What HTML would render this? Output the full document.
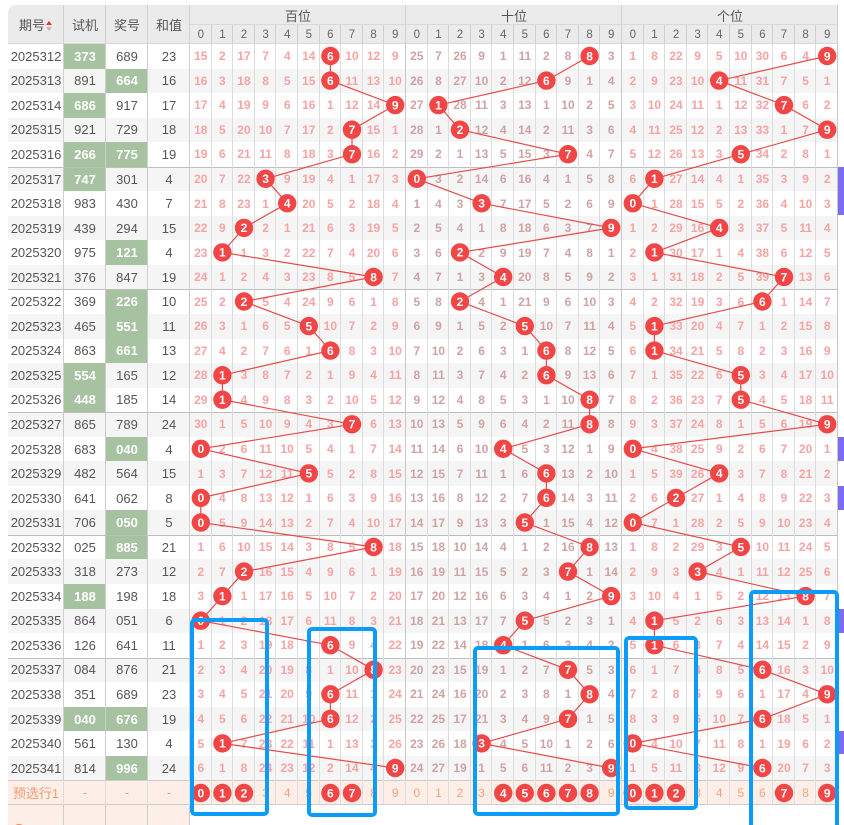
<!DOCTYPE html>
<html><head><meta charset="utf-8"><style>
html,body{margin:0;padding:0;background:#fff;width:844px;height:825px;overflow:hidden;position:relative}
table{position:absolute;left:8px;top:5px;border-collapse:collapse;table-layout:fixed;width:830px;font-family:"Liberation Sans","Noto Sans CJK SC",sans-serif}
td,th{padding:0;text-align:center;overflow:hidden;white-space:nowrap;box-shadow:inset -1px 0 #dcdcdc}
thead th{background:#ebebeb;color:#555;font-weight:normal;font-size:13px;box-shadow:inset -1px 0 #d0d0d0,inset 0 -1px #d8d8d8}
thead tr.h1 th{height:20px}
thead tr.h2 th{height:19px;font-size:11.5px;color:#666}
th.l{font-size:13px}
tbody td{height:24.55px;font-size:12px;font-weight:bold;color:#f7a3a3}
tbody tr:nth-child(even) td{background:#f5f5f5}
tbody td:nth-child(-n+4){color:#555;font-weight:normal;font-size:13px;box-shadow:inset -1px 0 #cfcfcf}
tbody td:nth-child(n+15):nth-child(-n+24){color:#cfa3a3}
tbody td:nth-child(14),tbody td:nth-child(24),tbody td:nth-child(34){box-shadow:inset -1px 0 #c8c8c8}
tbody tr.s td{box-shadow:inset -1px 0 #dcdcdc,inset 0 1px #bdbdbd}
tbody tr.s td:nth-child(-n+4),tbody tr.s td:nth-child(14),tbody tr.s td:nth-child(24),tbody tr.s td:nth-child(34){box-shadow:inset -1px 0 #c8c8c8,inset 0 1px #bdbdbd}
tbody td.g{background:#a6c2a0 !important;color:#fff !important;font-weight:bold !important}
tbody tr.p td{background:#fdeee7 !important;color:#f3a27a !important;font-weight:normal;height:25px;box-shadow:inset -1px 0 #ddd,inset 0 1px #ccc,inset 0 -1px #ccc}
tbody tr.p td:nth-child(-n+4){color:#f39a72 !important;font-size:13px}
tbody tr.q td{height:20px;background:#fff !important;box-shadow:none}
tbody tr.q td:nth-child(-n+4){background:#fdeee7 !important;box-shadow:inset -1px 0 #ccc}
.ar{display:inline-block;width:8px;vertical-align:middle;position:relative;height:12px}
.ar:before{content:"";position:absolute;left:1px;top:0;border:3.5px solid transparent;border-bottom:4px solid #e33;border-top:0}
.ar:after{content:"";position:absolute;left:1px;top:6px;border:3.5px solid transparent;border-top:4px solid #bbb;border-bottom:0}
.pb{position:absolute;left:838px;width:6px;background:#7b6cf2}
svg{position:absolute;left:0;top:0}
</style></head><body>
<div class="pb" style="top:167px;height:48px"></div>
<div class="pb" style="top:437px;height:24px"></div>
<div class="pb" style="top:486px;height:24px"></div>
<div class="pb" style="top:609px;height:24px"></div>
<div class="pb" style="top:731px;height:23px"></div>
<table>
<colgroup><col style="width:56px"><col style="width:42px"><col style="width:42px"><col style="width:42px">
<col span="30" style="width:21.6px"></colgroup>
<thead>
<tr class="h1"><th rowspan="2" class="l" style="border-top-left-radius:8px">期号<span class="ar"></span></th><th rowspan="2" class="l">试机</th><th rowspan="2" class="l">奖号</th><th rowspan="2" class="l">和值</th><th colspan="10">百位</th><th colspan="10">十位</th><th colspan="10">个位</th></tr>
<tr class="h2"><th>0</th><th>1</th><th>2</th><th>3</th><th>4</th><th>5</th><th>6</th><th>7</th><th>8</th><th>9</th><th>0</th><th>1</th><th>2</th><th>3</th><th>4</th><th>5</th><th>6</th><th>7</th><th>8</th><th>9</th><th>0</th><th>1</th><th>2</th><th>3</th><th>4</th><th>5</th><th>6</th><th>7</th><th>8</th><th>9</th></tr>
</thead>
<tbody>
<tr><td>2025312</td><td class="g">373</td><td>689</td><td>23</td><td>15</td><td>2</td><td>17</td><td>7</td><td>4</td><td>14</td><td></td><td>10</td><td>12</td><td>9</td><td>25</td><td>7</td><td>26</td><td>9</td><td>1</td><td>11</td><td>2</td><td>8</td><td></td><td>3</td><td>1</td><td>8</td><td>22</td><td>9</td><td>5</td><td>10</td><td>30</td><td>6</td><td>4</td><td></td></tr>
<tr><td>2025313</td><td>891</td><td class="g">664</td><td>16</td><td>16</td><td>3</td><td>18</td><td>8</td><td>5</td><td>15</td><td></td><td>11</td><td>13</td><td>10</td><td>26</td><td>8</td><td>27</td><td>10</td><td>2</td><td>12</td><td></td><td>9</td><td>1</td><td>4</td><td>2</td><td>9</td><td>23</td><td>10</td><td></td><td>11</td><td>31</td><td>7</td><td>5</td><td>1</td></tr>
<tr><td>2025314</td><td class="g">686</td><td>917</td><td>17</td><td>17</td><td>4</td><td>19</td><td>9</td><td>6</td><td>16</td><td>1</td><td>12</td><td>14</td><td></td><td>27</td><td></td><td>28</td><td>11</td><td>3</td><td>13</td><td>1</td><td>10</td><td>2</td><td>5</td><td>3</td><td>10</td><td>24</td><td>11</td><td>1</td><td>12</td><td>32</td><td></td><td>6</td><td>2</td></tr>
<tr><td>2025315</td><td>921</td><td>729</td><td>18</td><td>18</td><td>5</td><td>20</td><td>10</td><td>7</td><td>17</td><td>2</td><td></td><td>15</td><td>1</td><td>28</td><td>1</td><td></td><td>12</td><td>4</td><td>14</td><td>2</td><td>11</td><td>3</td><td>6</td><td>4</td><td>11</td><td>25</td><td>12</td><td>2</td><td>13</td><td>33</td><td>1</td><td>7</td><td></td></tr>
<tr><td>2025316</td><td class="g">266</td><td class="g">775</td><td>19</td><td>19</td><td>6</td><td>21</td><td>11</td><td>8</td><td>18</td><td>3</td><td></td><td>16</td><td>2</td><td>29</td><td>2</td><td>1</td><td>13</td><td>5</td><td>15</td><td>3</td><td></td><td>4</td><td>7</td><td>5</td><td>12</td><td>26</td><td>13</td><td>3</td><td></td><td>34</td><td>2</td><td>8</td><td>1</td></tr>
<tr class="s"><td>2025317</td><td class="g">747</td><td>301</td><td>4</td><td>20</td><td>7</td><td>22</td><td></td><td>9</td><td>19</td><td>4</td><td>1</td><td>17</td><td>3</td><td></td><td>3</td><td>2</td><td>14</td><td>6</td><td>16</td><td>4</td><td>1</td><td>5</td><td>8</td><td>6</td><td></td><td>27</td><td>14</td><td>4</td><td>1</td><td>35</td><td>3</td><td>9</td><td>2</td></tr>
<tr><td>2025318</td><td>983</td><td>430</td><td>7</td><td>21</td><td>8</td><td>23</td><td>1</td><td></td><td>20</td><td>5</td><td>2</td><td>18</td><td>4</td><td>1</td><td>4</td><td>3</td><td></td><td>7</td><td>17</td><td>5</td><td>2</td><td>6</td><td>9</td><td></td><td>1</td><td>28</td><td>15</td><td>5</td><td>2</td><td>36</td><td>4</td><td>10</td><td>3</td></tr>
<tr><td>2025319</td><td>439</td><td>294</td><td>15</td><td>22</td><td>9</td><td></td><td>2</td><td>1</td><td>21</td><td>6</td><td>3</td><td>19</td><td>5</td><td>2</td><td>5</td><td>4</td><td>1</td><td>8</td><td>18</td><td>6</td><td>3</td><td>7</td><td></td><td>1</td><td>2</td><td>29</td><td>16</td><td></td><td>3</td><td>37</td><td>5</td><td>11</td><td>4</td></tr>
<tr><td>2025320</td><td>975</td><td class="g">121</td><td>4</td><td>23</td><td></td><td>1</td><td>3</td><td>2</td><td>22</td><td>7</td><td>4</td><td>20</td><td>6</td><td>3</td><td>6</td><td></td><td>2</td><td>9</td><td>19</td><td>7</td><td>4</td><td>8</td><td>1</td><td>2</td><td></td><td>30</td><td>17</td><td>1</td><td>4</td><td>38</td><td>6</td><td>12</td><td>5</td></tr>
<tr><td>2025321</td><td>376</td><td>847</td><td>19</td><td>24</td><td>1</td><td>2</td><td>4</td><td>3</td><td>23</td><td>8</td><td>5</td><td></td><td>7</td><td>4</td><td>7</td><td>1</td><td>3</td><td></td><td>20</td><td>8</td><td>5</td><td>9</td><td>2</td><td>3</td><td>1</td><td>31</td><td>18</td><td>2</td><td>5</td><td>39</td><td></td><td>13</td><td>6</td></tr>
<tr class="s"><td>2025322</td><td>369</td><td class="g">226</td><td>10</td><td>25</td><td>2</td><td></td><td>5</td><td>4</td><td>24</td><td>9</td><td>6</td><td>1</td><td>8</td><td>5</td><td>8</td><td></td><td>4</td><td>1</td><td>21</td><td>9</td><td>6</td><td>10</td><td>3</td><td>4</td><td>2</td><td>32</td><td>19</td><td>3</td><td>6</td><td></td><td>1</td><td>14</td><td>7</td></tr>
<tr><td>2025323</td><td>465</td><td class="g">551</td><td>11</td><td>26</td><td>3</td><td>1</td><td>6</td><td>5</td><td></td><td>10</td><td>7</td><td>2</td><td>9</td><td>6</td><td>9</td><td>1</td><td>5</td><td>2</td><td></td><td>10</td><td>7</td><td>11</td><td>4</td><td>5</td><td></td><td>33</td><td>20</td><td>4</td><td>7</td><td>1</td><td>2</td><td>15</td><td>8</td></tr>
<tr><td>2025324</td><td>863</td><td class="g">661</td><td>13</td><td>27</td><td>4</td><td>2</td><td>7</td><td>6</td><td>1</td><td></td><td>8</td><td>3</td><td>10</td><td>7</td><td>10</td><td>2</td><td>6</td><td>3</td><td>1</td><td></td><td>8</td><td>12</td><td>5</td><td>6</td><td></td><td>34</td><td>21</td><td>5</td><td>8</td><td>2</td><td>3</td><td>16</td><td>9</td></tr>
<tr><td>2025325</td><td class="g">554</td><td>165</td><td>12</td><td>28</td><td></td><td>3</td><td>8</td><td>7</td><td>2</td><td>1</td><td>9</td><td>4</td><td>11</td><td>8</td><td>11</td><td>3</td><td>7</td><td>4</td><td>2</td><td></td><td>9</td><td>13</td><td>6</td><td>7</td><td>1</td><td>35</td><td>22</td><td>6</td><td></td><td>3</td><td>4</td><td>17</td><td>10</td></tr>
<tr><td>2025326</td><td class="g">448</td><td>185</td><td>14</td><td>29</td><td></td><td>4</td><td>9</td><td>8</td><td>3</td><td>2</td><td>10</td><td>5</td><td>12</td><td>9</td><td>12</td><td>4</td><td>8</td><td>5</td><td>3</td><td>1</td><td>10</td><td></td><td>7</td><td>8</td><td>2</td><td>36</td><td>23</td><td>7</td><td></td><td>4</td><td>5</td><td>18</td><td>11</td></tr>
<tr class="s"><td>2025327</td><td>865</td><td>789</td><td>24</td><td>30</td><td>1</td><td>5</td><td>10</td><td>9</td><td>4</td><td>3</td><td></td><td>6</td><td>13</td><td>10</td><td>13</td><td>5</td><td>9</td><td>6</td><td>4</td><td>2</td><td>11</td><td></td><td>8</td><td>9</td><td>3</td><td>37</td><td>24</td><td>8</td><td>1</td><td>5</td><td>6</td><td>19</td><td></td></tr>
<tr><td>2025328</td><td>683</td><td class="g">040</td><td>4</td><td></td><td>2</td><td>6</td><td>11</td><td>10</td><td>5</td><td>4</td><td>1</td><td>7</td><td>14</td><td>11</td><td>14</td><td>6</td><td>10</td><td></td><td>5</td><td>3</td><td>12</td><td>1</td><td>9</td><td></td><td>4</td><td>38</td><td>25</td><td>9</td><td>2</td><td>6</td><td>7</td><td>20</td><td>1</td></tr>
<tr><td>2025329</td><td>482</td><td>564</td><td>15</td><td>1</td><td>3</td><td>7</td><td>12</td><td>11</td><td></td><td>5</td><td>2</td><td>8</td><td>15</td><td>12</td><td>15</td><td>7</td><td>11</td><td>1</td><td>6</td><td></td><td>13</td><td>2</td><td>10</td><td>1</td><td>5</td><td>39</td><td>26</td><td></td><td>3</td><td>7</td><td>8</td><td>21</td><td>2</td></tr>
<tr><td>2025330</td><td>641</td><td>062</td><td>8</td><td></td><td>4</td><td>8</td><td>13</td><td>12</td><td>1</td><td>6</td><td>3</td><td>9</td><td>16</td><td>13</td><td>16</td><td>8</td><td>12</td><td>2</td><td>7</td><td></td><td>14</td><td>3</td><td>11</td><td>2</td><td>6</td><td></td><td>27</td><td>1</td><td>4</td><td>8</td><td>9</td><td>22</td><td>3</td></tr>
<tr><td>2025331</td><td>706</td><td class="g">050</td><td>5</td><td></td><td>5</td><td>9</td><td>14</td><td>13</td><td>2</td><td>7</td><td>4</td><td>10</td><td>17</td><td>14</td><td>17</td><td>9</td><td>13</td><td>3</td><td></td><td>1</td><td>15</td><td>4</td><td>12</td><td></td><td>7</td><td>1</td><td>28</td><td>2</td><td>5</td><td>9</td><td>10</td><td>23</td><td>4</td></tr>
<tr class="s"><td>2025332</td><td>025</td><td class="g">885</td><td>21</td><td>1</td><td>6</td><td>10</td><td>15</td><td>14</td><td>3</td><td>8</td><td>5</td><td></td><td>18</td><td>15</td><td>18</td><td>10</td><td>14</td><td>4</td><td>1</td><td>2</td><td>16</td><td></td><td>13</td><td>1</td><td>8</td><td>2</td><td>29</td><td>3</td><td></td><td>10</td><td>11</td><td>24</td><td>5</td></tr>
<tr><td>2025333</td><td>318</td><td>273</td><td>12</td><td>2</td><td>7</td><td></td><td>16</td><td>15</td><td>4</td><td>9</td><td>6</td><td>1</td><td>19</td><td>16</td><td>19</td><td>11</td><td>15</td><td>5</td><td>2</td><td>3</td><td></td><td>1</td><td>14</td><td>2</td><td>9</td><td>3</td><td></td><td>4</td><td>1</td><td>11</td><td>12</td><td>25</td><td>6</td></tr>
<tr><td>2025334</td><td class="g">188</td><td>198</td><td>18</td><td>3</td><td></td><td>1</td><td>17</td><td>16</td><td>5</td><td>10</td><td>7</td><td>2</td><td>20</td><td>17</td><td>20</td><td>12</td><td>16</td><td>6</td><td>3</td><td>4</td><td>1</td><td>2</td><td></td><td>3</td><td>10</td><td>4</td><td>1</td><td>5</td><td>2</td><td>12</td><td>13</td><td></td><td>7</td></tr>
<tr><td>2025335</td><td>864</td><td>051</td><td>6</td><td></td><td>1</td><td>2</td><td>18</td><td>17</td><td>6</td><td>11</td><td>8</td><td>3</td><td>21</td><td>18</td><td>21</td><td>13</td><td>17</td><td>7</td><td></td><td>5</td><td>2</td><td>3</td><td>1</td><td>4</td><td></td><td>5</td><td>2</td><td>6</td><td>3</td><td>13</td><td>14</td><td>1</td><td>8</td></tr>
<tr><td>2025336</td><td>126</td><td>641</td><td>11</td><td>1</td><td>2</td><td>3</td><td>19</td><td>18</td><td>7</td><td></td><td>9</td><td>4</td><td>22</td><td>19</td><td>22</td><td>14</td><td>18</td><td></td><td>1</td><td>6</td><td>3</td><td>4</td><td>2</td><td>5</td><td></td><td>6</td><td>3</td><td>7</td><td>4</td><td>14</td><td>15</td><td>2</td><td>9</td></tr>
<tr class="s"><td>2025337</td><td>084</td><td>876</td><td>21</td><td>2</td><td>3</td><td>4</td><td>20</td><td>19</td><td>8</td><td>1</td><td>10</td><td></td><td>23</td><td>20</td><td>23</td><td>15</td><td>19</td><td>1</td><td>2</td><td>7</td><td></td><td>5</td><td>3</td><td>6</td><td>1</td><td>7</td><td>4</td><td>8</td><td>5</td><td></td><td>16</td><td>3</td><td>10</td></tr>
<tr><td>2025338</td><td>351</td><td>689</td><td>23</td><td>3</td><td>4</td><td>5</td><td>21</td><td>20</td><td>9</td><td></td><td>11</td><td>1</td><td>24</td><td>21</td><td>24</td><td>16</td><td>20</td><td>2</td><td>3</td><td>8</td><td>1</td><td></td><td>4</td><td>7</td><td>2</td><td>8</td><td>5</td><td>9</td><td>6</td><td>1</td><td>17</td><td>4</td><td></td></tr>
<tr><td>2025339</td><td class="g">040</td><td class="g">676</td><td>19</td><td>4</td><td>5</td><td>6</td><td>22</td><td>21</td><td>10</td><td></td><td>12</td><td>2</td><td>25</td><td>22</td><td>25</td><td>17</td><td>21</td><td>3</td><td>4</td><td>9</td><td></td><td>1</td><td>5</td><td>8</td><td>3</td><td>9</td><td>6</td><td>10</td><td>7</td><td></td><td>18</td><td>5</td><td>1</td></tr>
<tr><td>2025340</td><td>561</td><td>130</td><td>4</td><td>5</td><td></td><td>7</td><td>23</td><td>22</td><td>11</td><td>1</td><td>13</td><td>3</td><td>26</td><td>23</td><td>26</td><td>18</td><td></td><td>4</td><td>5</td><td>10</td><td>1</td><td>2</td><td>6</td><td></td><td>4</td><td>10</td><td>7</td><td>11</td><td>8</td><td>1</td><td>19</td><td>6</td><td>2</td></tr>
<tr><td>2025341</td><td>814</td><td class="g">996</td><td>24</td><td>6</td><td>1</td><td>8</td><td>24</td><td>23</td><td>12</td><td>2</td><td>14</td><td>4</td><td></td><td>24</td><td>27</td><td>19</td><td>1</td><td>5</td><td>6</td><td>11</td><td>2</td><td>3</td><td></td><td>1</td><td>5</td><td>11</td><td>8</td><td>12</td><td>9</td><td></td><td>20</td><td>7</td><td>3</td></tr>
<tr class="p"><td>预选行1</td><td>-</td><td>-</td><td>-</td><td></td><td></td><td></td><td>3</td><td>4</td><td>5</td><td></td><td></td><td>8</td><td>9</td><td>0</td><td>1</td><td>2</td><td>3</td><td></td><td></td><td></td><td></td><td></td><td>9</td><td></td><td></td><td></td><td>3</td><td>4</td><td>5</td><td>6</td><td></td><td>8</td><td></td></tr>
<tr class="q"><td></td><td></td><td></td><td></td><td></td><td></td><td></td><td></td><td></td><td></td><td></td><td></td><td></td><td></td><td></td><td></td><td></td><td></td><td></td><td></td><td></td><td></td><td></td><td></td><td></td><td></td><td></td><td></td><td></td><td></td><td></td><td></td><td></td><td></td></tr>
</tbody></table>
<svg width="844" height="825" viewBox="0 0 844 825">
<circle cx="19" cy="831" r="7" fill="#f28a5c"/>
<g fill="none" stroke="#e84a4a" stroke-width="1.2">
<polyline points="330.4,56 330.4,80.6 395.2,105.1 352,129.7 352,154.2 265.6,178.8 287.2,203.3 244,227.9 222.4,252.4 373.6,277 244,301.5 308.8,326.1 330.4,350.6 222.4,375.2 222.4,399.7 352,424.3 200.8,448.8 308.8,473.4 200.8,497.9 200.8,522.5 373.6,547 244,571.6 222.4,596.1 200.8,620.7 330.4,645.2 373.6,669.8 330.4,694.3 330.4,718.9 222.4,743.4 395.2,768"/>
<polyline points="589.6,56 546.4,80.6 438.4,105.1 460,129.7 568,154.2 416.8,178.8 481.6,203.3 611.2,227.9 460,252.4 503.2,277 460,301.5 524.8,326.1 546.4,350.6 546.4,375.2 589.6,399.7 589.6,424.3 503.2,448.8 546.4,473.4 546.4,497.9 524.8,522.5 589.6,547 568,571.6 611.2,596.1 524.8,620.7 503.2,645.2 568,669.8 589.6,694.3 568,718.9 481.6,743.4 611.2,768"/>
<polyline points="827.2,56 719.2,80.6 784,105.1 827.2,129.7 740.8,154.2 654.4,178.8 632.8,203.3 719.2,227.9 654.4,252.4 784,277 762.4,301.5 654.4,326.1 654.4,350.6 740.8,375.2 740.8,399.7 827.2,424.3 632.8,448.8 719.2,473.4 676,497.9 632.8,522.5 740.8,547 697.6,571.6 805.6,596.1 654.4,620.7 654.4,645.2 762.4,669.8 827.2,694.3 762.4,718.9 632.8,743.4 762.4,768"/>
</g>
<g fill="#f24545">
<circle cx="330.4" cy="56" r="9.2"/><circle cx="330.4" cy="80.6" r="9.2"/><circle cx="395.2" cy="105.1" r="9.2"/><circle cx="352" cy="129.7" r="9.2"/><circle cx="352" cy="154.2" r="9.2"/><circle cx="265.6" cy="178.8" r="9.2"/><circle cx="287.2" cy="203.3" r="9.2"/><circle cx="244" cy="227.9" r="9.2"/><circle cx="222.4" cy="252.4" r="9.2"/><circle cx="373.6" cy="277" r="9.2"/><circle cx="244" cy="301.5" r="9.2"/><circle cx="308.8" cy="326.1" r="9.2"/><circle cx="330.4" cy="350.6" r="9.2"/><circle cx="222.4" cy="375.2" r="9.2"/><circle cx="222.4" cy="399.7" r="9.2"/><circle cx="352" cy="424.3" r="9.2"/><circle cx="200.8" cy="448.8" r="9.2"/><circle cx="308.8" cy="473.4" r="9.2"/><circle cx="200.8" cy="497.9" r="9.2"/><circle cx="200.8" cy="522.5" r="9.2"/><circle cx="373.6" cy="547" r="9.2"/><circle cx="244" cy="571.6" r="9.2"/><circle cx="222.4" cy="596.1" r="9.2"/><circle cx="200.8" cy="620.7" r="9.2"/><circle cx="330.4" cy="645.2" r="9.2"/><circle cx="373.6" cy="669.8" r="9.2"/><circle cx="330.4" cy="694.3" r="9.2"/><circle cx="330.4" cy="718.9" r="9.2"/><circle cx="222.4" cy="743.4" r="9.2"/><circle cx="395.2" cy="768" r="9.2"/>
<circle cx="589.6" cy="56" r="9.2"/><circle cx="546.4" cy="80.6" r="9.2"/><circle cx="438.4" cy="105.1" r="9.2"/><circle cx="460" cy="129.7" r="9.2"/><circle cx="568" cy="154.2" r="9.2"/><circle cx="416.8" cy="178.8" r="9.2"/><circle cx="481.6" cy="203.3" r="9.2"/><circle cx="611.2" cy="227.9" r="9.2"/><circle cx="460" cy="252.4" r="9.2"/><circle cx="503.2" cy="277" r="9.2"/><circle cx="460" cy="301.5" r="9.2"/><circle cx="524.8" cy="326.1" r="9.2"/><circle cx="546.4" cy="350.6" r="9.2"/><circle cx="546.4" cy="375.2" r="9.2"/><circle cx="589.6" cy="399.7" r="9.2"/><circle cx="589.6" cy="424.3" r="9.2"/><circle cx="503.2" cy="448.8" r="9.2"/><circle cx="546.4" cy="473.4" r="9.2"/><circle cx="546.4" cy="497.9" r="9.2"/><circle cx="524.8" cy="522.5" r="9.2"/><circle cx="589.6" cy="547" r="9.2"/><circle cx="568" cy="571.6" r="9.2"/><circle cx="611.2" cy="596.1" r="9.2"/><circle cx="524.8" cy="620.7" r="9.2"/><circle cx="503.2" cy="645.2" r="9.2"/><circle cx="568" cy="669.8" r="9.2"/><circle cx="589.6" cy="694.3" r="9.2"/><circle cx="568" cy="718.9" r="9.2"/><circle cx="481.6" cy="743.4" r="9.2"/><circle cx="611.2" cy="768" r="9.2"/>
<circle cx="827.2" cy="56" r="9.2"/><circle cx="719.2" cy="80.6" r="9.2"/><circle cx="784" cy="105.1" r="9.2"/><circle cx="827.2" cy="129.7" r="9.2"/><circle cx="740.8" cy="154.2" r="9.2"/><circle cx="654.4" cy="178.8" r="9.2"/><circle cx="632.8" cy="203.3" r="9.2"/><circle cx="719.2" cy="227.9" r="9.2"/><circle cx="654.4" cy="252.4" r="9.2"/><circle cx="784" cy="277" r="9.2"/><circle cx="762.4" cy="301.5" r="9.2"/><circle cx="654.4" cy="326.1" r="9.2"/><circle cx="654.4" cy="350.6" r="9.2"/><circle cx="740.8" cy="375.2" r="9.2"/><circle cx="740.8" cy="399.7" r="9.2"/><circle cx="827.2" cy="424.3" r="9.2"/><circle cx="632.8" cy="448.8" r="9.2"/><circle cx="719.2" cy="473.4" r="9.2"/><circle cx="676" cy="497.9" r="9.2"/><circle cx="632.8" cy="522.5" r="9.2"/><circle cx="740.8" cy="547" r="9.2"/><circle cx="697.6" cy="571.6" r="9.2"/><circle cx="805.6" cy="596.1" r="9.2"/><circle cx="654.4" cy="620.7" r="9.2"/><circle cx="654.4" cy="645.2" r="9.2"/><circle cx="762.4" cy="669.8" r="9.2"/><circle cx="827.2" cy="694.3" r="9.2"/><circle cx="762.4" cy="718.9" r="9.2"/><circle cx="632.8" cy="743.4" r="9.2"/><circle cx="762.4" cy="768" r="9.2"/>
<circle cx="200.8" cy="793" r="9.2"/><circle cx="222.4" cy="793" r="9.2"/><circle cx="244" cy="793" r="9.2"/><circle cx="330.4" cy="793" r="9.2"/><circle cx="352" cy="793" r="9.2"/>
<circle cx="503.2" cy="793" r="9.2"/><circle cx="524.8" cy="793" r="9.2"/><circle cx="546.4" cy="793" r="9.2"/><circle cx="568" cy="793" r="9.2"/><circle cx="589.6" cy="793" r="9.2"/>
<circle cx="632.8" cy="793" r="9.2"/><circle cx="654.4" cy="793" r="9.2"/><circle cx="676" cy="793" r="9.2"/><circle cx="784" cy="793" r="9.2"/><circle cx="827.2" cy="793" r="9.2"/>
</g>
<g fill="#fff" font-family="Liberation Sans, sans-serif" font-size="12" font-weight="bold" text-anchor="middle">
<text x="330.4" y="60.3">6</text><text x="330.4" y="84.9">6</text><text x="395.2" y="109.4">9</text><text x="352" y="134">7</text><text x="352" y="158.5">7</text><text x="265.6" y="183.1">3</text><text x="287.2" y="207.6">4</text><text x="244" y="232.2">2</text><text x="222.4" y="256.7">1</text><text x="373.6" y="281.3">8</text><text x="244" y="305.8">2</text><text x="308.8" y="330.4">5</text><text x="330.4" y="354.9">6</text><text x="222.4" y="379.5">1</text><text x="222.4" y="404">1</text><text x="352" y="428.6">7</text><text x="200.8" y="453.1">0</text><text x="308.8" y="477.7">5</text><text x="200.8" y="502.2">0</text><text x="200.8" y="526.8">0</text><text x="373.6" y="551.3">8</text><text x="244" y="575.9">2</text><text x="222.4" y="600.4">1</text><text x="200.8" y="625">0</text><text x="330.4" y="649.5">6</text><text x="373.6" y="674.1">8</text><text x="330.4" y="698.6">6</text><text x="330.4" y="723.2">6</text><text x="222.4" y="747.7">1</text><text x="395.2" y="772.3">9</text>
<text x="589.6" y="60.3">8</text><text x="546.4" y="84.9">6</text><text x="438.4" y="109.4">1</text><text x="460" y="134">2</text><text x="568" y="158.5">7</text><text x="416.8" y="183.1">0</text><text x="481.6" y="207.6">3</text><text x="611.2" y="232.2">9</text><text x="460" y="256.7">2</text><text x="503.2" y="281.3">4</text><text x="460" y="305.8">2</text><text x="524.8" y="330.4">5</text><text x="546.4" y="354.9">6</text><text x="546.4" y="379.5">6</text><text x="589.6" y="404">8</text><text x="589.6" y="428.6">8</text><text x="503.2" y="453.1">4</text><text x="546.4" y="477.7">6</text><text x="546.4" y="502.2">6</text><text x="524.8" y="526.8">5</text><text x="589.6" y="551.3">8</text><text x="568" y="575.9">7</text><text x="611.2" y="600.4">9</text><text x="524.8" y="625">5</text><text x="503.2" y="649.5">4</text><text x="568" y="674.1">7</text><text x="589.6" y="698.6">8</text><text x="568" y="723.2">7</text><text x="481.6" y="747.7">3</text><text x="611.2" y="772.3">9</text>
<text x="827.2" y="60.3">9</text><text x="719.2" y="84.9">4</text><text x="784" y="109.4">7</text><text x="827.2" y="134">9</text><text x="740.8" y="158.5">5</text><text x="654.4" y="183.1">1</text><text x="632.8" y="207.6">0</text><text x="719.2" y="232.2">4</text><text x="654.4" y="256.7">1</text><text x="784" y="281.3">7</text><text x="762.4" y="305.8">6</text><text x="654.4" y="330.4">1</text><text x="654.4" y="354.9">1</text><text x="740.8" y="379.5">5</text><text x="740.8" y="404">5</text><text x="827.2" y="428.6">9</text><text x="632.8" y="453.1">0</text><text x="719.2" y="477.7">4</text><text x="676" y="502.2">2</text><text x="632.8" y="526.8">0</text><text x="740.8" y="551.3">5</text><text x="697.6" y="575.9">3</text><text x="805.6" y="600.4">8</text><text x="654.4" y="625">1</text><text x="654.4" y="649.5">1</text><text x="762.4" y="674.1">6</text><text x="827.2" y="698.6">9</text><text x="762.4" y="723.2">6</text><text x="632.8" y="747.7">0</text><text x="762.4" y="772.3">6</text>
<text x="200.8" y="797.3">0</text><text x="222.4" y="797.3">1</text><text x="244" y="797.3">2</text><text x="330.4" y="797.3">6</text><text x="352" y="797.3">7</text>
<text x="503.2" y="797.3">4</text><text x="524.8" y="797.3">5</text><text x="546.4" y="797.3">6</text><text x="568" y="797.3">7</text><text x="589.6" y="797.3">8</text>
<text x="632.8" y="797.3">0</text><text x="654.4" y="797.3">1</text><text x="676" y="797.3">2</text><text x="784" y="797.3">7</text><text x="827.2" y="797.3">9</text>
</g>
<g fill="none" stroke="#0b9cf7" stroke-width="4">
<rect x="192" y="620" width="75" height="194" rx="3"/>
<rect x="309" y="629" width="66" height="186" rx="3"/>
<rect x="475" y="648" width="143" height="166" rx="3"/>
<rect x="626" y="638" width="70" height="170" rx="3"/>
<rect x="751" y="592" width="86" height="240" rx="3"/>
</g>
</svg>
</body></html>
